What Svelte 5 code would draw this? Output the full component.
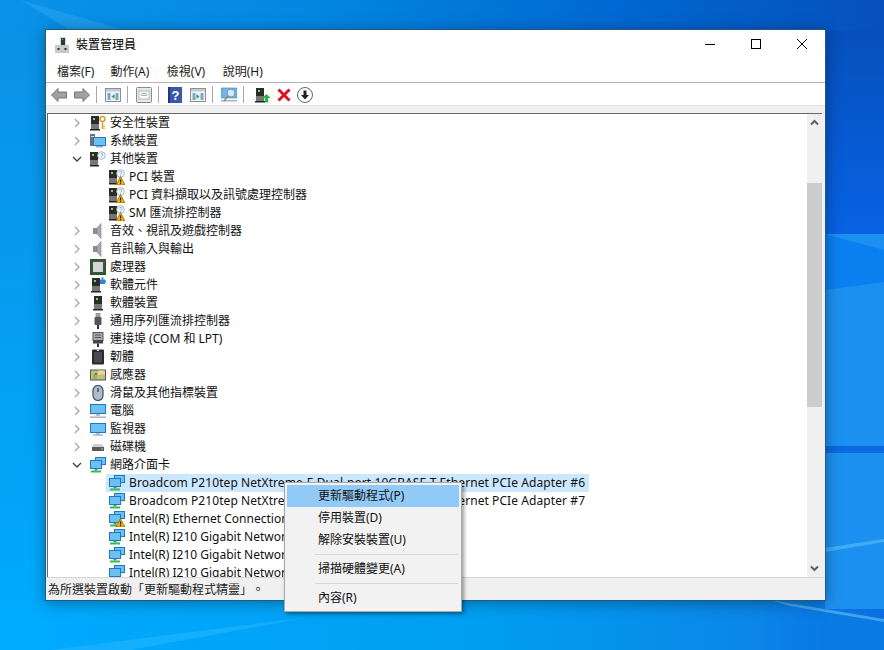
<script>
  const rows = [
    { label: '安全性裝置', icon: 'security', arrow: 'closed' },
    { label: '系統裝置', icon: 'system', arrow: 'closed' },
    { label: '其他裝置', icon: 'other', arrow: 'open' },
    { label: 'PCI 裝置', icon: 'unknown', child: true },
    { label: 'PCI 資料擷取以及訊號處理控制器', icon: 'unknown', child: true },
    { label: 'SM 匯流排控制器', icon: 'unknown', child: true },
    { label: '音效、視訊及遊戲控制器', icon: 'sound', arrow: 'closed' },
    { label: '音訊輸入與輸出', icon: 'sound', arrow: 'closed' },
    { label: '處理器', icon: 'cpu', arrow: 'closed' },
    { label: '軟體元件', icon: 'softcomp', arrow: 'closed' },
    { label: '軟體裝置', icon: 'tower', arrow: 'closed' },
    { label: '通用序列匯流排控制器', icon: 'usb', arrow: 'closed' },
    { label: '連接埠 (COM 和 LPT)', icon: 'port', arrow: 'closed' },
    { label: '韌體', icon: 'chip', arrow: 'closed' },
    { label: '感應器', icon: 'sensor', arrow: 'closed' },
    { label: '滑鼠及其他指標裝置', icon: 'mouse', arrow: 'closed' },
    { label: '電腦', icon: 'computer', arrow: 'closed' },
    { label: '監視器', icon: 'monitor', arrow: 'closed' },
    { label: '磁碟機', icon: 'disk', arrow: 'closed' },
    { label: '網路介面卡', icon: 'net', arrow: 'open' },
    { label: 'Broadcom P210tep NetXtreme-E Dual-port 10GBASE-T Ethernet PCIe Adapter #6', icon: 'net', child: true, selected: true, long: true },
    { label: 'Broadcom P210tep NetXtreme-E Dual-port 10GBASE-T Ethernet PCIe Adapter #7', icon: 'net', child: true, long: true },
    { label: 'Intel(R) Ethernet Connection (7) I219-LM', icon: 'netwarn', child: true },
    { label: 'Intel(R) I210 Gigabit Network Connection', icon: 'net', child: true },
    { label: 'Intel(R) I210 Gigabit Network Connection', icon: 'net', child: true },
    { label: 'Intel(R) I210 Gigabit Network Connection', icon: 'net', child: true }
  ];
  const menus = ['檔案(F)', '動作(A)', '檢視(V)', '說明(H)'];
</script>

{#snippet towerShape(x, y)}
  <rect x={x} y={y} width="8" height="13" fill="#2b2b2b" />
  <rect x={x} y={y + 8} width="8" height="5" fill="#777" />
  <rect x={x + 2} y={y + 2} width="2" height="2" fill="#5fe05f" />
  <rect x={x - 1} y={y + 13} width="10" height="1.5" fill="#222" />
{/snippet}

{#snippet screen(x, y, w, h)}
  <rect x={x} y={y} width={w} height={h} fill="#1f78c4" />
  <rect x={x + 1} y={y + 1} width={w - 2} height={h - 2} fill="#6cc0f2" />
{/snippet}

{#snippet warnTri()}
  <path d="M11.5 7.5 L16 16 H7 Z" fill="#f4b400" stroke="#8a5a00" stroke-width=".7" />
  <rect x="11" y="10.4" width="1.1" height="3" fill="#222" />
  <rect x="11" y="14" width="1.1" height="1.1" fill="#222" />
{/snippet}

{#snippet netShape()}
  {@render screen(5, 0, 11, 8)}
  {@render screen(0, 3, 12, 9)}
  <rect x="4.5" y="12" width="3" height="1.5" fill="#6b8a6b" />
  <rect x="1" y="13.5" width="10" height="2" fill="#35bf4a" />
{/snippet}

{#snippet icon(kind)}
  <svg class="ico" width="16" height="16" viewBox="0 0 16 16" aria-hidden="true">
    {#if kind === 'security'}
      {@render towerShape(1, 1)}
      <circle cx="12.5" cy="4" r="2.5" fill="none" stroke="#d9a52e" stroke-width="1.6" />
      <rect x="11.7" y="6.3" width="1.6" height="7.7" fill="#d9a52e" />
      <rect x="13.3" y="10.5" width="1.5" height="1.2" fill="#d9a52e" />
      <rect x="13.3" y="12.6" width="1.5" height="1.2" fill="#d9a52e" />
    {:else if kind === 'system'}
      <rect x="0" y="1" width="5" height="12" fill="#6f6f6f" />
      <rect x="1" y="3" width="3" height="1" fill="#ddd" />
      {@render screen(3, 4, 13, 9)}
      <rect x="6" y="13" width="7" height="1.5" fill="#9ab" />
    {:else if kind === 'other'}
      {@render towerShape(0, 1)}
      <circle cx="11.5" cy="4.5" r="3.8" fill="#fff" stroke="#9fb4c8" />
      <text x="11.5" y="7" font-size="6.5" text-anchor="middle" fill="#3a77b5" font-family="Liberation Sans">?</text>
    {:else if kind === 'unknown'}
      {@render towerShape(0, 1)}
      <circle cx="11.5" cy="4.5" r="3.8" fill="#fff" stroke="#9fb4c8" />
      <text x="11.5" y="7" font-size="6.5" text-anchor="middle" fill="#3a77b5" font-family="Liberation Sans">?</text>
      {@render warnTri()}
    {:else if kind === 'sound'}
      <rect x="3" y="5" width="4" height="6" fill="#8d8d8d" />
      <path d="M7 5 L11 0.5 V15.5 L7 11 Z" fill="#a9a9a9" stroke="#777" stroke-width=".5" />
    {:else if kind === 'cpu'}
      <rect x="0.5" y="0.5" width="15" height="15" fill="#2f5d3a" stroke="#3a4a3a" />
      <rect x="3" y="3" width="10" height="10" fill="#d6d6d6" />
    {:else if kind === 'softcomp'}
      {@render towerShape(2, 1)}
      <rect x="10" y="2.5" width="5" height="4.5" fill="#2a86d8" />
      <rect x="11.5" y="0.5" width="2" height="2" fill="#2a86d8" />
      <rect x="15" y="3.5" width="1" height="2" fill="#2a86d8" />
    {:else if kind === 'tower'}
      {@render towerShape(4, 1)}
    {:else if kind === 'usb'}
      <rect x="6" y="0" width="4" height="4" fill="#a8a8a8" stroke="#666" stroke-width=".5" />
      <rect x="4.5" y="4" width="7" height="8" rx="1" fill="#555" />
      <rect x="7" y="12" width="2" height="4" fill="#333" />
    {:else if kind === 'port'}
      <rect x="3" y="1.5" width="10" height="8" fill="#aaa" stroke="#555" />
      <rect x="3" y="9.5" width="10" height="3" fill="#444" />
      <rect x="7" y="12.5" width="2" height="3.5" fill="#333" />
      <path d="M5 4 H11 M5 6.5 H11" stroke="#555" />
    {:else if kind === 'chip'}
      <rect x="2" y="0.5" width="12" height="15" rx="1" fill="#2a2a2a" />
      <rect x="4" y="3" width="8" height="10.5" fill="#4a4a4a" />
      <path d="M6.5 0.5 a1.5 1.5 0 0 0 3 0Z" fill="#ddd" />
    {:else if kind === 'sensor'}
      <rect x="0.5" y="3" width="15" height="10" fill="#b9c37a" stroke="#555" />
      <rect x="8" y="3.5" width="7" height="4" fill="#e8d88a" />
      <rect x="3" y="7" width="4" height="5" fill="#8fb56a" />
      <circle cx="6" cy="7" r="1.3" fill="#d8503a" />
    {:else if kind === 'mouse'}
      <rect x="3" y="0.5" width="10" height="15" rx="5" fill="#aebcc8" stroke="#44505a" stroke-width="1.2" />
      <rect x="7.2" y="3" width="1.6" height="4" fill="#3d5f7f" />
    {:else if kind === 'computer'}
      {@render screen(0, 1, 16, 10)}
      <rect x="6" y="11" width="4" height="2" fill="#b5c0c8" />
      <rect x="0" y="13.5" width="16" height="1.5" fill="#a8b4bc" />
    {:else if kind === 'monitor'}
      {@render screen(0, 2, 16, 10)}
      <rect x="6" y="12" width="4" height="1.5" fill="#b5c0c8" />
      <rect x="3" y="13.5" width="10" height="1" fill="#8a96a0" />
    {:else if kind === 'disk'}
      <path d="M2 8 L4 5 H12 L14 8 Z" fill="#cfcfcf" />
      <rect x="2" y="8" width="12" height="4" fill="#5a5a5a" />
      <rect x="11" y="9.5" width="2" height="1" fill="#7fe07f" />
    {:else if kind === 'net'}
      {@render netShape()}
    {:else if kind === 'netwarn'}
      {@render netShape()}
      {@render warnTri()}
    {/if}
  </svg>
{/snippet}

{#snippet pane(dir)}
  <rect x=".5" y="1.5" width="15" height="13" fill="#eef3f8" stroke="#8f8f8f" />
  <rect x="1" y="2" width="14" height="2.5" fill="#c4ccd4" />
  <rect x="2.5" y="6" width="3" height="7" fill="#7ea6c8" />
  <rect x="10.5" y="6" width="3" height="7" fill="#7ea6c8" />
  <path d={dir === 'left' ? 'M9.5 7 L6.5 9.5 L9.5 12 Z' : 'M6.5 7 L9.5 9.5 L6.5 12 Z'} fill="#2fa84f" />
{/snippet}

<div class="desktop" lang="zh-TW">
  <svg class="wallpaper" width="884" height="650" viewBox="0 0 884 650" aria-hidden="true">
    <defs>
      <linearGradient id="wallLeft" x1="0" y1="0" x2="0" y2="1">
        <stop offset="0" stop-color="#0a90e4" />
        <stop offset="1" stop-color="#00abff" />
      </linearGradient>
      <linearGradient id="wallTop" x1="0" y1="0" x2="1" y2="0">
        <stop offset="0" stop-color="#0a92e8" />
        <stop offset="0.34" stop-color="#0288e2" />
        <stop offset="0.7" stop-color="#0068d2" />
        <stop offset="1" stop-color="#0650bc" />
      </linearGradient>
      <linearGradient id="wallBottom" x1="0" y1="0" x2="1" y2="0">
        <stop offset="0" stop-color="#00abff" />
        <stop offset="0.55" stop-color="#009ef2" />
        <stop offset="0.85" stop-color="#0a86e8" />
        <stop offset="1" stop-color="#0a6ee0" />
      </linearGradient>
      <linearGradient id="wallRight" x1="0" y1="0" x2="0" y2="1">
        <stop offset="0" stop-color="#0650bc" />
        <stop offset="1" stop-color="#0862e4" />
      </linearGradient>
    </defs>
    <rect width="46" height="650" fill="url(#wallLeft)" />
    <rect width="884" height="30" fill="url(#wallTop)" />
    <rect y="600" width="884" height="50" fill="url(#wallBottom)" />
    <rect x="825" y="30" width="59" height="205" fill="url(#wallRight)" />
    <rect x="825" y="234" width="59" height="375" fill="#1c90f0" />
    <path d="M825 234 L884 250 V282 L825 290 Z" fill="#0a80f0" />
    <rect x="825" y="446" width="59" height="7" fill="#0a6ae0" />
    <path d="M825 548 L884 539 V542 L825 552 Z" fill="#49b5f4" opacity=".8" />
    <path d="M825 612 L884 622 V650 H825 Z" fill="#0a7ae4" />
    <path d="M770 600 L884 619 V622 L790 606 Z" fill="#5ab8f2" opacity=".7" />
    <path d="M20 0 L125 30 L70 30 Z" fill="#2ea5f0" opacity=".5" />
    <path d="M50 650 L310 617 L130 650 Z" fill="#22b6ff" opacity=".6" />
  </svg>

  <section class="window">
    <header class="titlebar">
      <svg class="app-icon" width="14" height="16" viewBox="0 0 14 16" aria-hidden="true">
        <rect x="5" y="0" width="6" height="8" fill="#d8d8d8" />
        <rect x="6" y="1" width="4" height="7" fill="#2f3a34" />
        <rect x="7" y="2" width="1" height="1" fill="#6fdc6f" />
        <rect x="0" y="8" width="14" height="8" fill="#c9c9c9" />
        <rect x="2.5" y="11" width="2" height="2" fill="#333" />
        <rect x="9.5" y="11" width="2" height="2" fill="#333" />
      </svg>
      <span class="title">裝置管理員</span>
      <div class="caption">
        <span class="cap-btn">
          <svg width="10" height="10" viewBox="0 0 10 10"><path d="M0 5.5 H10" stroke="#000" /></svg>
        </span>
        <span class="cap-btn">
          <svg width="10" height="10" viewBox="0 0 10 10"><rect x=".5" y=".5" width="9" height="9" fill="none" stroke="#000" /></svg>
        </span>
        <span class="cap-btn">
          <svg width="10" height="10" viewBox="0 0 10 10"><path d="M0 0 L10 10 M10 0 L0 10" stroke="#000" /></svg>
        </span>
      </div>
    </header>

    <nav class="menubar">
      {#each menus as m}
        <span class="menu-item">{m}</span>
      {/each}
    </nav>

    <div class="toolbar">
      <span class="tool">
        <svg width="16" height="16" viewBox="0 0 16 16"><path d="M0.5 8 L7 1.5 V5 H15.5 V11 H7 V14.5 Z" fill="#a0a0a0" stroke="#777" /></svg>
      </span>
      <span class="tool">
        <svg width="16" height="16" viewBox="0 0 16 16"><path d="M15.5 8 L9 1.5 V5 H0.5 V11 H9 V14.5 Z" fill="#a0a0a0" stroke="#777" /></svg>
      </span>
      <span class="sep"></span>
      <span class="tool"><svg width="16" height="16" viewBox="0 0 16 16">{@render pane('left')}</svg></span>
      <span class="sep"></span>
      <span class="tool">
        <svg width="16" height="16" viewBox="0 0 16 16">
          <rect x=".5" y=".5" width="15" height="15" rx="1" fill="#e4e8ec" stroke="#8a8a8a" />
          <rect x="3" y="4" width="10" height="8" fill="#fff" stroke="#b0b8c0" />
          <path d="M5 6.5 H11 M5 8.5 H11" stroke="#8ab0d0" />
        </svg>
      </span>
      <span class="sep"></span>
      <span class="tool">
        <svg width="14" height="16" viewBox="0 0 14 16">
          <rect width="14" height="16" fill="#3a57a8" />
          <rect x="0" y="0" width="2" height="16" fill="#1f3680" />
          <text x="7.5" y="13" font-size="13" font-weight="700" text-anchor="middle" fill="#fff" font-family="Liberation Sans">?</text>
        </svg>
      </span>
      <span class="tool"><svg width="16" height="16" viewBox="0 0 16 16">{@render pane('right')}</svg></span>
      <span class="sep"></span>
      <span class="tool">
        <svg width="16" height="16" viewBox="0 0 16 16">
          <rect x="0" y="1" width="16" height="10" fill="#6fb5e6" stroke="#3f86bd" stroke-width=".6" />
          <rect x="0" y="13" width="16" height="1.5" fill="#a8b4bc" />
          <circle cx="10" cy="6" r="4" fill="#cfeafb" stroke="#7b98ad" />
          <path d="M7 9 L3 14" stroke="#8a8a8a" stroke-width="1.5" />
        </svg>
      </span>
      <span class="sep"></span>
      <span class="tool after-sep">
        <svg width="16" height="16" viewBox="0 0 16 16">
          {@render towerShape(1, 1)}
          <path d="M11.5 7 L15.8 11 H13.2 V15.5 H9.8 V11 H7.2 Z" fill="#27b34a" />
        </svg>
      </span>
      <span class="tool tight">
        <svg width="14" height="14" viewBox="0 0 14 14"><path d="M1.5 1.5 L12.5 12.5 M12.5 1.5 L1.5 12.5" stroke="#e0101c" stroke-width="3" /></svg>
      </span>
      <span class="tool tight">
        <svg width="16" height="16" viewBox="0 0 16 16">
          <circle cx="8" cy="8" r="7.5" fill="#fff" stroke="#666" />
          <path d="M6.5 3.5 H9.5 V8 H12 L8 12.5 L4 8 H6.5 Z" fill="#222" />
        </svg>
      </span>
    </div>

    <div class="tree-wrap">
      <div class="tree">
        {#each rows as row}
          <div class="row" class:child={row.child}>
            {#if row.arrow}
              <svg class="arrow" width="10" height="10" viewBox="0 0 10 10" aria-hidden="true">
                {#if row.arrow === 'open'}
                  <path d="M1 3 L5 7 L9 3" fill="none" stroke="#404040" stroke-width="1.3" />
                {:else}
                  <path d="M3 1 L7 5 L3 9" fill="none" stroke="#a6a6a6" stroke-width="1.3" />
                {/if}
              </svg>
            {/if}
            <div class="row-body" class:selected={row.selected}>
              {@render icon(row.icon)}
              <span class="row-label" class:long={row.long}>{row.label}</span>
            </div>
          </div>
        {/each}
      </div>
      <div class="scrollbar">
        <span class="sb-btn">
          <svg width="9" height="7" viewBox="0 0 9 7"><path d="M1 5.5 L4.5 2 L8 5.5" fill="none" stroke="#606060" stroke-width="2" /></svg>
        </span>
        <div class="sb-track"><div class="sb-thumb"></div></div>
        <span class="sb-btn">
          <svg width="9" height="7" viewBox="0 0 9 7"><path d="M1 1.5 L4.5 5 L8 1.5" fill="none" stroke="#606060" stroke-width="2" /></svg>
        </span>
      </div>
    </div>

    <footer class="status">
      <span class="status-text">為所選裝置啟動「更新驅動程式精靈」。</span>
    </footer>
  </section>

  <div class="ctx">
    <div class="ctx-item active">更新驅動程式(P)</div>
    <div class="ctx-item">停用裝置(D)</div>
    <div class="ctx-item">解除安裝裝置(U)</div>
    <div class="ctx-sep"></div>
    <div class="ctx-item">掃描硬體變更(A)</div>
    <div class="ctx-sep"></div>
    <div class="ctx-item">內容(R)</div>
  </div>
</div>

<style>
  :global(body) {
    margin: 0;
    font-family: "Noto Sans", "Noto Sans CJK TC", sans-serif;
    font-size: 12px;
    color: #000;
    text-spacing-trim: space-all;
  }
  .desktop {
    position: relative;
    width: 884px;
    height: 650px;
    overflow: hidden;
  }
  .wallpaper { position: absolute; inset: 0; }

  .window {
    position: absolute;
    left: 45px;
    top: 29px;
    width: 781px;
    height: 572px;
    box-sizing: border-box;
    border: 1px solid #1f5a80;
    background: #fff;
    box-shadow: 0 2px 14px rgba(0, 0, 0, 0.35);
    display: flex;
    flex-direction: column;
  }

  .titlebar {
    height: 30px;
    display: flex;
    align-items: center;
    flex-shrink: 0;
  }
  .app-icon { margin-left: 9px; margin-right: 7px; }
  .title { line-height: 30px; }
  .caption { margin-left: auto; display: flex; }
  .cap-btn {
    width: 46px;
    height: 30px;
    display: flex;
    align-items: center;
    justify-content: center;
    margin-top: -2px;
  }

  .menubar {
    height: 22px;
    display: flex;
    align-items: center;
    border-bottom: 1px solid #b4b4b4;
    flex-shrink: 0;
    padding-left: 3px;
  }
  .menu-item { padding: 0 8px; white-space: nowrap; color: #1a1a1a; }
  .menu-item + .menu-item { padding-right: 9.5px; }

  .toolbar {
    height: 21px;
    padding-top: 1px;
    padding-left: 1px;
    display: flex;
    align-items: center;
    flex-shrink: 0;
    border-bottom: 1px solid #e3e3e3;
  }
  .tool {
    width: 23px;
    height: 21px;
    display: flex;
    align-items: center;
    justify-content: center;
    flex-shrink: 0;
  }
  .tool.after-sep { margin-left: 3px; }
  .tool.tight { margin-left: -2px; }
  .sep {
    width: 1px;
    height: 17px;
    background: #a8a8a8;
    margin: 0 4px 0 3px;
    flex-shrink: 0;
  }

  .tree-wrap {
    flex: 1;
    min-height: 0;
    display: flex;
    background: #fff;
    border-top: 7px solid #f0f0f0;
    border-left: 1px solid #f0f0f0;
    border-right: 3px solid #f0f0f0;
  }
  .tree {
    flex: 1;
    min-width: 0;
    overflow: hidden;
    border-top: 1px solid #696969;
    border-left: 1px solid #696969;
  }
  .row {
    height: 18px;
    display: flex;
    align-items: center;
    position: relative;
    padding-left: 39px;
  }
  .row.child { padding-left: 58px; }
  .arrow { position: absolute; left: 24px; top: 4px; }
  .row-body {
    display: flex;
    align-items: center;
    height: 18px;
    padding: 0 4px 0 3px;
    white-space: nowrap;
  }
  .row-body.selected { background: #cce8ff; }
  .ico { flex-shrink: 0; margin-right: 4px; }
  .row-label { line-height: 18px; color: #111; }
  .row-label.long { letter-spacing: 0.08px; }

  .scrollbar {
    width: 15px;
    flex-shrink: 0;
    background: #f0f0f0;
    border-top: 1px solid #696969;
    display: flex;
    flex-direction: column;
  }
  .sb-btn {
    height: 17px;
    display: flex;
    align-items: center;
    justify-content: center;
    flex-shrink: 0;
  }
  .sb-track { flex: 1; padding-top: 52px; }
  .sb-thumb { height: 224px; background: #cdcdcd; }

  .status {
    height: 22px;
    flex-shrink: 0;
    background: #f0f0f0;
    border-top: 1px solid #d7d7d7;
    display: flex;
    align-items: center;
    padding-left: 2px;
  }
  .status-text { color: #1a1a1a; }

  .ctx {
    position: absolute;
    left: 284px;
    top: 482px;
    width: 178px;
    height: 130px;
    box-sizing: border-box;
    padding: 2px;
    background: #f2f2f2;
    border: 1px solid #a8a8a8;
    box-shadow: 2px 2px 4px rgba(0, 0, 0, 0.4);
  }
  .ctx-item {
    height: 22px;
    line-height: 22px;
    padding-left: 31px;
    color: #111;
  }
  .ctx-item.active { background: #91c9f7; }
  .ctx-sep {
    height: 1px;
    background: #d7d7d7;
    margin: 3px 1px 3px 28px;
  }
</style>
